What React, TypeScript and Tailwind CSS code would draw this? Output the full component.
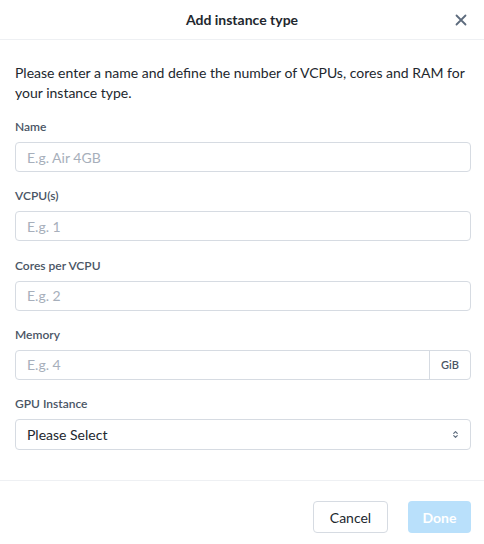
import { ChevronDown, ChevronUp } from "lucide-react";

const font = { fontFamily: "Lato, 'Open Sans', sans-serif" };

function Field({ label, placeholder, addon }: { label: string; placeholder: string; addon?: string }) {
  return (
    <div className="flex flex-col">
      <label className="h-4 mb-[7px] text-[12px] leading-4 font-semibold text-[#4a5565]">{label}</label>
      <div className="flex h-[30px] rounded-[4px] border border-[#d6dbe2] bg-white">
        <input
          className="flex-1 min-w-0 px-[11px] text-[14px] text-[#22272e] placeholder:text-[#a7afbb] outline-none bg-transparent"
          placeholder={placeholder}
        />
        {addon && (
          <div className="w-[41px] border-l border-[#d6dbe2] flex items-center justify-center text-[11px] font-semibold text-[#4a5565]">
            {addon}
          </div>
        )}
      </div>
    </div>
  );
}

export default function App() {
  return (
    <div className="w-[484px] h-[544px] bg-white flex flex-col" style={font}>
      <div className="h-10 shrink-0 border-b border-[#eef0f3] flex items-center justify-center relative">
        <h1 className="text-[14px] font-bold text-[#22272e]">Add instance type</h1>
        <button className="absolute right-[11px] top-[8px] w-6 h-6 flex items-center justify-center text-[#5d6b7d]">
          <svg width="12" height="12" viewBox="0 0 12 12">
            <path d="M1.5 1.5 L10.5 10.5 M10.5 1.5 L1.5 10.5" stroke="currentColor" strokeWidth="1.8" strokeLinecap="round" />
          </svg>
        </button>
      </div>
      <div className="flex-1 pl-[15px] pr-[13px] pt-[23px] flex flex-col">
        <p className="text-[14px] leading-5 text-[#22272e] mb-4">
          Please enter a name and define the number of VCPUs, cores and RAM for your instance type.
        </p>
        <div className="flex flex-col gap-[16.3px]">
          <Field label="Name" placeholder="E.g. Air 4GB" />
          <Field label="VCPU(s)" placeholder="E.g. 1" />
          <Field label="Cores per VCPU" placeholder="E.g. 2" />
          <Field label="Memory" placeholder="E.g. 4" addon="GiB" />
          <div className="flex flex-col">
            <label className="h-4 mb-[7px] text-[12px] leading-4 font-semibold text-[#4a5565]">GPU Instance</label>
            <div className="h-[31px] rounded-[4px] border border-[#d6dbe2] flex items-center px-[11px]">
              <span className="flex-1 text-[14px] text-[#22272e]">Please Select</span>
              <span className="flex flex-col items-center text-[#5d6b7d] -space-y-[3px]">
                <ChevronUp size={7} strokeWidth={4} />
                <ChevronDown size={7} strokeWidth={4} />
              </span>
            </div>
          </div>
        </div>
      </div>
      <div className="h-16 shrink-0 border-t border-[#eef0f3] flex items-start justify-end gap-5 pt-5 pr-[13px]">
        <button className="h-8 w-[75px] rounded-[4px] border border-[#d6dbe2] bg-white text-[14px] text-[#22272e]">
          Cancel
        </button>
        <button className="h-8 w-[63px] rounded-[4px] bg-[#b9e0fb] text-[14px] font-bold text-white">
          Done
        </button>
      </div>
    </div>
  );
}
